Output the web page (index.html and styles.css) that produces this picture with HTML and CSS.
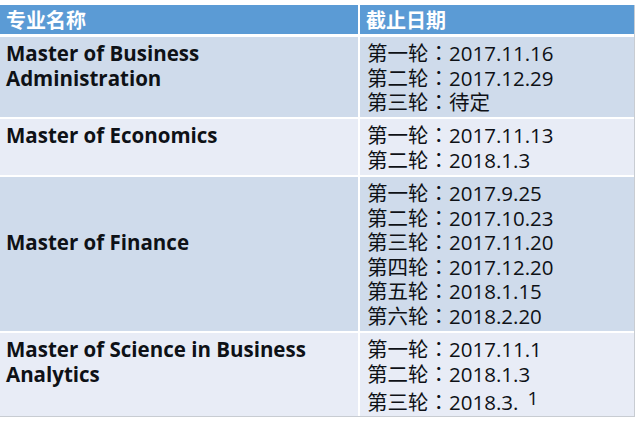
FILE: index.html
```html
<!DOCTYPE html>
<html lang="zh">
<head>
<meta charset="utf-8">
<link rel="stylesheet" href="styles.css">
</head>
<body>
<div class="table">
  <div class="cell head">专业名称</div>
  <div class="cell head">截止日期</div>

  <div class="cell name dark">Master of Business<br>Administration</div>
  <div class="cell dates dark">第一轮<span lang="zh-Hant">：</span>2017.11.16<br>第二轮<span lang="zh-Hant">：</span>2017.12.29<br>第三轮<span lang="zh-Hant">：</span>待定</div>

  <div class="cell name light">Master of Economics</div>
  <div class="cell dates light">第一轮<span lang="zh-Hant">：</span>2017.11.13<br>第二轮<span lang="zh-Hant">：</span>2018.1.3</div>

  <div class="cell name dark mid">Master of Finance</div>
  <div class="cell dates dark">第一轮<span lang="zh-Hant">：</span>2017.9.25<br>第二轮<span lang="zh-Hant">：</span>2017.10.23<br>第三轮<span lang="zh-Hant">：</span>2017.11.20<br>第四轮<span lang="zh-Hant">：</span>2017.12.20<br>第五轮<span lang="zh-Hant">：</span>2018.1.15<br>第六轮<span lang="zh-Hant">：</span>2018.2.20</div>

  <div class="cell name light last">Master of Science in Business<br>Analytics</div>
  <div class="cell dates light last">第一轮<span lang="zh-Hant">：</span>2017.11.1<br>第二轮<span lang="zh-Hant">：</span>2018.1.3<br>第三轮<span lang="zh-Hant">：</span>2018.3.<span class="raised">1</span></div>
</div>
</body>
</html>
```
FILE: styles.css
```css
html, body {
  margin: 0;
  padding: 0;
  background: #ffffff;
}
.table {
  margin-top: 5px;
  width: 634px;
  display: grid;
  grid-template-columns: 358px 274px;
  grid-template-rows: 30px 80px 56px 154px 83px;
  column-gap: 2px;
  row-gap: 2px;
  border-right: 1px solid #c8ccd2;
  border-bottom: 1px solid #c8ccd2;
  font-family: "Open Sans", "Noto Sans CJK SC", sans-serif;
  font-size: 20.5px;
  line-height: 24.5px;
  color: #0e1116;
}
.cell {
  padding: 4px 0 0 6px;
}
.head {
  background: #5b9bd5;
  color: #ffffff;
  font-family: "Noto Sans CJK SC", sans-serif;
  font-size: 20px;
  font-weight: 700;
  line-height: 26px;
  padding-top: 2px;
  margin-bottom: 1px;
}
.name {
  font-weight: 700;
}
.dates {
  padding-left: 7px;
  font-family: "Open Sans", "Noto Sans CJK TC", sans-serif;
}
.dark {
  background: #cfdbeb;
}
.light {
  background: #e8ecf6;
}
.mid {
  display: flex;
  align-items: center;
  padding-top: 0;
  padding-bottom: 24px;
}
.last {
  padding-top: 4px;
}
.raised {
  margin-left: 9px;
  vertical-align: 5px;
  font-size: 19px;
}
```
